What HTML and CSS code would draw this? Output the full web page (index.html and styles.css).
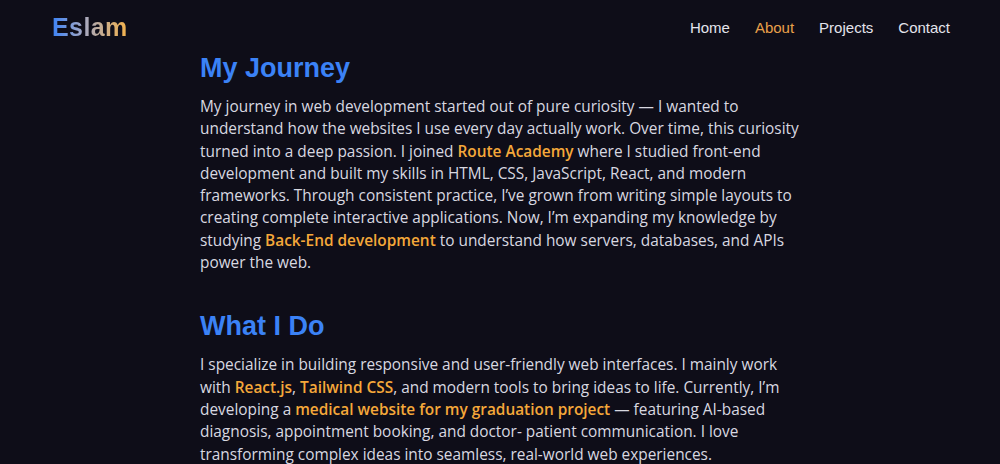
FILE: index.html
```html
<!DOCTYPE html>
<html lang="en">
<head>
<meta charset="utf-8">
<title>Eslam - About</title>
<link rel="stylesheet" href="styles.css">
</head>
<body>
<header class="navbar">
  <div class="logo">Eslam</div>
  <nav class="nav-links">
    <a href="#">Home</a>
    <a href="#" class="active">About</a>
    <a href="#">Projects</a>
    <a href="#">Contact</a>
  </nav>
</header>
<main class="content">
  <section class="block">
    <h2>My Journey</h2>
    <p>My journey in web development started out of pure curiosity — I wanted to understand how the websites I use every day actually work. Over time, this curiosity turned into a deep passion. I joined <strong>Route Academy</strong> where I studied front-end development and built my skills in HTML, CSS, JavaScript, React, and modern frameworks. Through consistent practice, I’ve grown from writing simple layouts to creating complete interactive applications. Now, I’m expanding my knowledge by studying <strong>Back-End development</strong> to understand how servers, databases, and APIs power the web.</p>
  </section>
  <section class="block">
    <h2>What I Do</h2>
    <p>I specialize in building responsive and user-friendly web interfaces. I mainly work with <strong>React.js</strong>, <strong>Tailwind CSS</strong>, and modern tools to bring ideas to life. Currently, I’m developing a <strong>medical website for my graduation project</strong> — featuring AI-based diagnosis, appointment booking, and doctor- patient communication. I love transforming complex ideas into seamless, real-world web experiences.</p>
  </section>
</main>
</body>
</html>
```
FILE: styles.css
```css
* { box-sizing: border-box; }
html, body { margin: 0; padding: 0; }
body {
  background: #0e0d18;
  color: #d8d8e0;
  font-family: "Open Sans", sans-serif;
  overflow: hidden;
}
.navbar {
  display: flex;
  justify-content: space-between;
  align-items: center;
  padding: 8px 50px 0 52px;
  height: 46px;
  font-family: "Liberation Sans", Arial, sans-serif;
}
.logo {
  font-size: 25px;
  font-weight: bold;
  letter-spacing: 0.4px;
  background: linear-gradient(90deg, #3b82f6 0%, #a3a8c6 40%, #f5b24a 100%);
  -webkit-background-clip: text;
  background-clip: text;
  color: transparent;
}
.nav-links {
  display: flex;
  gap: 25px;
}
.nav-links a {
  color: #e4e4ec;
  text-decoration: none;
  font-size: 15px;
}
.nav-links a.active { color: #e9a04a; }
.content {
  width: 600px;
  margin: 0 auto;
  padding-top: 5px;
}
.block { margin-bottom: 35px; }
.block h2 {
  color: #3b82f6;
  font-family: "Liberation Sans", Arial, sans-serif;
  font-size: 27px;
  font-weight: bold;
  margin: 0 0 11px;
  line-height: 34px;
}
.block p {
  margin: 0;
  font-size: 15.4px;
  line-height: 22.3px;
}
.block strong { color: #f5a83a; font-weight: 600; }
```
